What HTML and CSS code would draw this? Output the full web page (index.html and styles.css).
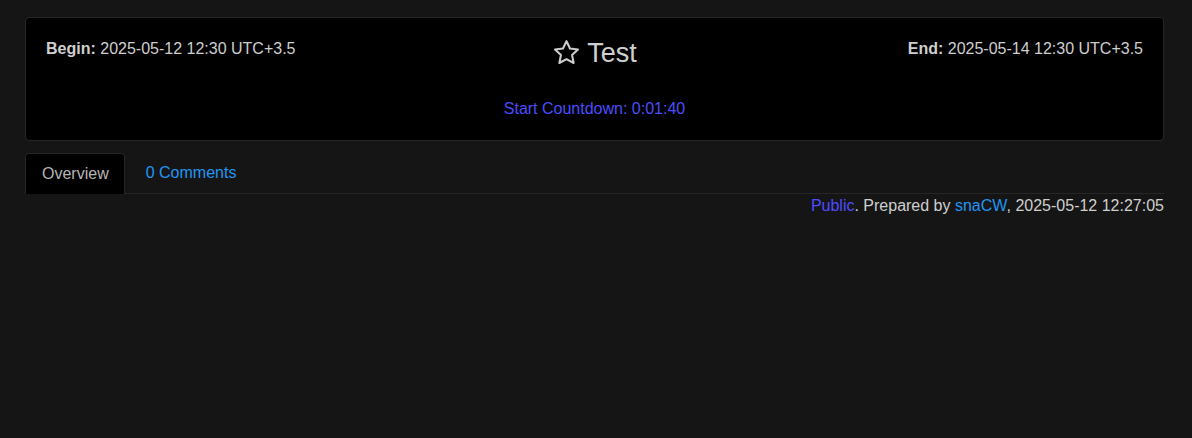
FILE: index.html
```html
<!DOCTYPE html>
<html>
<head>
<meta charset="utf-8">
<link rel="stylesheet" href="styles.css">
</head>
<body>
<div class="page">
  <div class="card">
    <div class="top">
      <div class="side"><b>Begin:</b> 2025-05-12 12:30 UTC+3.5</div>
      <h1 class="title">
        <svg class="star" viewBox="0 0 24 24" width="29" height="29"><path d="M12 2.6l2.9 6.1 6.6.8-4.9 4.6 1.3 6.6L12 17.4l-5.9 3.3 1.3-6.6-4.9-4.6 6.6-.8z" fill="none" stroke="#ccc" stroke-width="1.7" stroke-linejoin="round"/></svg>
        <span>Test</span>
      </h1>
      <div class="side right"><b>End:</b> 2025-05-14 12:30 UTC+3.5</div>
    </div>
    <div class="countdown">Start Countdown: 0:01:40</div>
  </div>
  <div class="tabs">
    <div class="tab active">Overview</div>
    <div class="tab link">0 Comments</div>
  </div>
  <div class="meta"><span class="pub">Public</span>. Prepared by <span class="user">snaCW</span>, 2025-05-12 12:27:05</div>
</div>
</body>
</html>
```
FILE: styles.css
```css
html, body {
  margin: 0;
  background: #151515;
}
body {
  font-family: "Liberation Sans", Arial, sans-serif;
  color: #cfcfcf;
  font-size: 16px;
}
.page {
  padding: 17px 28px 0 25px;
}
.card {
  background: #000;
  border: 1px solid #262626;
  border-radius: 4px;
  height: 122px;
  box-sizing: content-box;
  padding: 0 20px;
}
.top {
  display: flex;
  justify-content: space-between;
  align-items: flex-start;
  padding-top: 22px;
}
.side {
  flex: 1;
  line-height: 18px;
}
.side.right {
  text-align: right;
}
.title {
  margin: -1px 0 0 0;
  font-weight: normal;
  font-size: 27px;
  line-height: 26px;
  display: flex;
  align-items: center;
  gap: 6px;
  color: #cfcfcf;
}
.star {
  display: block;
  margin-top: -1px;
}
.countdown {
  text-align: center;
  color: #4d4dff;
  margin-top: 33px;
}
.tabs {
  display: flex;
  margin-top: 12px;
  border-bottom: 1px solid #262626;
  height: 40px;
}
.tab {
  padding: 0 15px 0 16px;
  line-height: 40px;
}
.tab.active {
  background: #000;
  border: 1px solid #262626;
  border-bottom: none;
  border-radius: 4px 4px 0 0;
  color: #b5b5b5;
  margin-bottom: -1px;
}
.tab.link {
  color: #2196f3;
  padding-left: 21px;
}
.meta {
  text-align: right;
  margin-top: 3px;
  line-height: 18px;
}
.pub {
  color: #4d4dff;
}
.user {
  color: #2196f3;
}
```
